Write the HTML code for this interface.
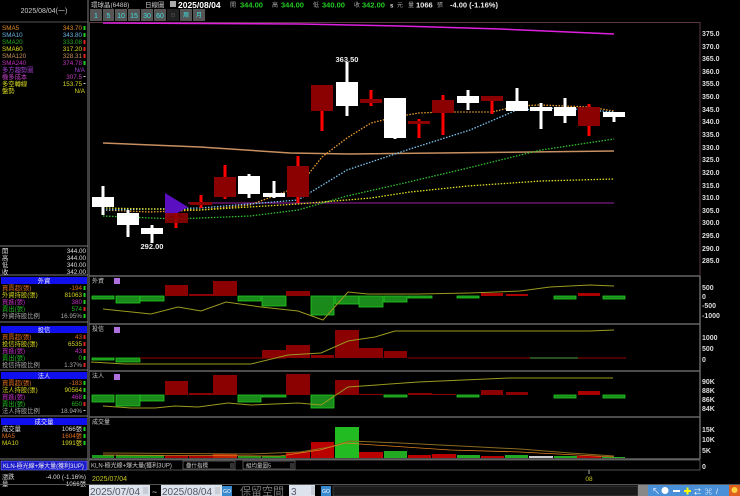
<!DOCTYPE html>
<html><head><meta charset="utf-8"><style>
html,body{margin:0;padding:0;background:#000;width:740px;height:496px;overflow:hidden}
svg{display:block}
text{font-family:"Liberation Sans","Noto Sans CJK TC",sans-serif}
</style></head><body>
<svg width="740" height="496" viewBox="0 0 740 496" xmlns="http://www.w3.org/2000/svg">
<rect width="740" height="496" fill="#000"/>
<!-- left panel borders -->
<line x1="88" y1="0" x2="88" y2="470" stroke="#555" stroke-width="1.5"/>
<line x1="0" y1="22" x2="88" y2="22" stroke="#555"/>
<line x1="0" y1="246" x2="88" y2="246" stroke="#777"/>
<line x1="0" y1="275" x2="88" y2="275" stroke="#777"/>
<text x="44" y="13" font-size="7" fill="#ccc" text-anchor="middle">2025/08/04(一)</text>
<g font-size="6.3">
<text x="2" y="30" fill="#e08a2a">SMA5</text><text x="82" y="30" fill="#e08a2a" text-anchor="end">343.70</text><rect x="83.5" y="26" width="2" height="4" fill="#2c2"/>
<text x="2" y="37" fill="#6ab4e0">SMA10</text><text x="82" y="37" fill="#6ab4e0" text-anchor="end">343.80</text><rect x="83.5" y="33" width="2" height="4" fill="#2c2"/>
<text x="2" y="44" fill="#22aa22">SMA20</text><text x="82" y="44" fill="#22aa22" text-anchor="end">333.08</text><rect x="83.5" y="40" width="2" height="4" fill="#d22"/>
<text x="2" y="51" fill="#d8d820">SMA60</text><text x="82" y="51" fill="#d8d820" text-anchor="end">317.20</text><rect x="83.5" y="47" width="2" height="4" fill="#d22"/>
<text x="2" y="58" fill="#c89060">SMA120</text><text x="82" y="58" fill="#c89060" text-anchor="end">328.31</text><rect x="83.5" y="54" width="2" height="4" fill="#d22"/>
<text x="2" y="65" fill="#c030c0">SMA240</text><text x="82" y="65" fill="#c030c0" text-anchor="end">374.78</text><rect x="83.5" y="61" width="2" height="4" fill="#2c2"/>
<text x="2" y="72" fill="#a040d0">多方趨勢圖</text><text x="85" y="72" fill="#a040d0" text-anchor="end">N/A</text>
<text x="2" y="79" fill="#c040c0">機多成本</text><text x="82" y="79" fill="#c040c0" text-anchor="end">307.5</text><rect x="83.5" y="76" width="2" height="1" fill="#ccc"/>
<text x="2" y="86" fill="#d8d820">多空轉線</text><text x="82" y="86" fill="#d8d820" text-anchor="end">153.75</text><rect x="83.5" y="83" width="2" height="1" fill="#ccc"/>
<text x="2" y="93" fill="#d8d820">盤勢</text><text x="85" y="93" fill="#d8d820" text-anchor="end">N/A</text>
</g>
<g font-size="6.3" fill="#ddd">
<text x="2" y="253">開</text><text x="86" y="253" text-anchor="end">344.00</text>
<text x="2" y="260">高</text><text x="86" y="260" text-anchor="end">344.00</text>
<text x="2" y="267">低</text><text x="86" y="267" text-anchor="end">340.00</text>
<text x="2" y="274">收</text><text x="86" y="274" text-anchor="end">342.00</text>
</g>
<!-- left info blocks -->
<g font-size="6.3">
<rect x="1" y="277" width="86" height="7" fill="#1010ee"/><text x="44" y="283" fill="#eee" text-anchor="middle">外資</text>
<text x="2" y="290" fill="#e07020">買賣超(張)</text><text x="82" y="290" fill="#e07020" text-anchor="end">-194</text><rect x="83.5" y="286" width="2" height="4" fill="#2c2"/>
<text x="2" y="297" fill="#d8d820">外資持股(張)</text><text x="82" y="297" fill="#d8d820" text-anchor="end">81063</text><rect x="83.5" y="293" width="2" height="4" fill="#2c2"/>
<text x="2" y="304" fill="#c030c0">買進(張)</text><text x="82" y="304" fill="#c030c0" text-anchor="end">380</text><rect x="83.5" y="300" width="2" height="4" fill="#2c2"/>
<text x="2" y="311" fill="#22bb22">賣出(張)</text><text x="82" y="311" fill="#22bb22" text-anchor="end">574</text><rect x="83.5" y="307" width="2" height="4" fill="#d22"/>
<text x="2" y="318" fill="#aaa">外資持股比例</text><text x="82" y="318" fill="#aaa" text-anchor="end">16.95%</text><rect x="83.5" y="314" width="2" height="4" fill="#2c2"/>
<line x1="0" y1="322" x2="88" y2="322" stroke="#777"/>
<rect x="1" y="326" width="86" height="7" fill="#1010ee"/><text x="44" y="332" fill="#eee" text-anchor="middle">投信</text>
<text x="2" y="339" fill="#e07020">買賣超(張)</text><text x="82" y="339" fill="#e07020" text-anchor="end">43</text><rect x="83.5" y="335" width="2" height="4" fill="#d22"/>
<text x="2" y="346" fill="#d8d820">投信持股(張)</text><text x="82" y="346" fill="#d8d820" text-anchor="end">6535</text><rect x="83.5" y="342" width="2" height="4" fill="#d22"/>
<text x="2" y="353" fill="#c030c0">買進(張)</text><text x="82" y="353" fill="#c030c0" text-anchor="end">43</text><rect x="83.5" y="349" width="2" height="4" fill="#d22"/>
<text x="2" y="360" fill="#22bb22">賣出(張)</text><text x="82" y="360" fill="#22bb22" text-anchor="end">0</text><rect x="83.5" y="356" width="2" height="4" fill="#2c2"/>
<text x="2" y="367" fill="#aaa">投信持股比例</text><text x="82" y="367" fill="#aaa" text-anchor="end">1.37%</text><rect x="83.5" y="363" width="2" height="4" fill="#d22"/>
<line x1="0" y1="370" x2="88" y2="370" stroke="#777"/>
<rect x="1" y="372" width="86" height="7" fill="#1010ee"/><text x="44" y="378" fill="#eee" text-anchor="middle">法人</text>
<text x="2" y="385" fill="#e07020">買賣超(張)</text><text x="82" y="385" fill="#e07020" text-anchor="end">-183</text><rect x="83.5" y="381" width="2" height="4" fill="#2c2"/>
<text x="2" y="392" fill="#d8d820">法人持股(張)</text><text x="82" y="392" fill="#d8d820" text-anchor="end">90564</text><rect x="83.5" y="388" width="2" height="4" fill="#2c2"/>
<text x="2" y="399" fill="#c030c0">買進(張)</text><text x="82" y="399" fill="#c030c0" text-anchor="end">468</text><rect x="83.5" y="395" width="2" height="4" fill="#2c2"/>
<text x="2" y="406" fill="#22bb22">賣出(張)</text><text x="82" y="406" fill="#22bb22" text-anchor="end">650</text><rect x="83.5" y="402" width="2" height="4" fill="#d22"/>
<text x="2" y="413" fill="#aaa">法人持股比例</text><text x="82" y="413" fill="#aaa" text-anchor="end">18.94%</text><rect x="83.5" y="410" width="2" height="1" fill="#ccc"/>
<line x1="0" y1="416" x2="88" y2="416" stroke="#777"/>
<rect x="1" y="418" width="86" height="7" fill="#1010ee"/><text x="44" y="424" fill="#eee" text-anchor="middle">成交量</text>
<text x="2" y="431" fill="#ddd">成交量</text><text x="82" y="431" fill="#ddd" text-anchor="end">1066張</text><rect x="83.5" y="427" width="2" height="4" fill="#2c2"/>
<text x="2" y="438" fill="#e07020">MA5</text><text x="82" y="438" fill="#e07020" text-anchor="end">1604張</text><rect x="83.5" y="434" width="2" height="4" fill="#2c2"/>
<text x="2" y="445" fill="#d8d820">MA10</text><text x="82" y="445" fill="#d8d820" text-anchor="end">1991張</text><rect x="83.5" y="441" width="2" height="4" fill="#2c2"/>
<line x1="0" y1="459" x2="88" y2="459" stroke="#777"/>
<rect x="1" y="461" width="86" height="9" fill="#1a1acc" stroke="#88f" stroke-width="0.6"/><text x="3" y="468" fill="#eee" font-size="6">KLN-極光線+爆大量(獲利3UP)</text>
<text x="2" y="479" fill="#ddd">漲跌</text><text x="86" y="479" fill="#ddd" text-anchor="end">-4.00 (-1.16%)</text>
<text x="2" y="486" fill="#ddd">量</text><text x="86" y="486" fill="#ddd" text-anchor="end">1066張</text>
</g>
<!-- top bar -->
<g font-size="6.5" fill="#ccc">
<text x="91" y="7">環球晶(6488)</text>
<text x="145" y="7">日線圖</text>
</g>
<rect x="170" y="1" width="6" height="6" fill="#aaa"/>
<text x="178" y="8" font-size="8.5" font-weight="bold" fill="#fff">2025/08/04</text>
<g font-size="7.5" font-weight="bold">
<text x="230" y="7" fill="#aaa" font-size="6" font-weight="normal">開</text><text x="240" y="7.5" fill="#22cc22">344.00</text>
<text x="272" y="7" fill="#aaa" font-size="6" font-weight="normal">高</text><text x="281" y="7.5" fill="#22cc22">344.00</text>
<text x="313" y="7" fill="#aaa" font-size="6" font-weight="normal">低</text><text x="322" y="7.5" fill="#22cc22">340.00</text>
<text x="354" y="7" fill="#aaa" font-size="6" font-weight="normal">收</text><text x="362" y="7.5" fill="#22cc22">342.00</text>
<text x="390" y="7.5" fill="#ddd" font-size="6">s</text><text x="397" y="7" fill="#aaa" font-size="6" font-weight="normal">元</text>
<text x="408" y="7" fill="#aaa" font-size="6" font-weight="normal">量</text><text x="416" y="7.5" fill="#eee">1066</text><text x="437" y="7" fill="#aaa" font-size="6" font-weight="normal">張</text>
<text x="450" y="7.5" fill="#eee">-4.00 (-1.16%)</text>
</g>
<g font-size="7" fill="#3ee0e0" text-anchor="middle">
<rect x="90" y="9" width="12" height="12" fill="#555"/><text x="96" y="18">1</text>
<rect x="103" y="9" width="11" height="12" fill="#555"/><text x="108.5" y="18">5</text>
<rect x="115" y="9" width="12" height="12" fill="#555"/><text x="121" y="18">10</text>
<rect x="128" y="9" width="12" height="12" fill="#555"/><text x="134" y="18">15</text>
<rect x="141" y="9" width="12" height="12" fill="#555"/><text x="147" y="18">30</text>
<rect x="154" y="9" width="12" height="12" fill="#555"/><text x="160" y="18">60</text>
<rect x="167" y="9" width="12" height="12" fill="#222"/><text x="173" y="17" fill="#555" font-size="5">日</text>
<rect x="180" y="9" width="12" height="12" fill="#555"/><text x="186" y="17" font-size="6">周</text>
<rect x="193" y="9" width="12" height="12" fill="#555"/><text x="199" y="17" font-size="6">月</text>
</g>
<!-- main chart frame -->
<line x1="89.5" y1="22" x2="89.5" y2="460" stroke="#444"/>
<line x1="700" y1="22" x2="700" y2="276" stroke="#5a3a40"/>
<line x1="89" y1="22.5" x2="700" y2="22.5" stroke="#5a3a40"/>
<!-- right axis -->
<g font-size="7" font-weight="bold" fill="#ddd">
<text x="702" y="36">375.0</text><text x="702" y="49">370.0</text><text x="702" y="61">365.0</text><text x="702" y="74">360.0</text><text x="702" y="86">355.0</text><text x="702" y="99">350.0</text><text x="702" y="112">345.0</text><text x="702" y="124">340.0</text><text x="702" y="137">335.0</text><text x="702" y="150">330.0</text><text x="702" y="162">325.0</text><text x="702" y="175">320.0</text><text x="702" y="188">315.0</text><text x="702" y="200">310.0</text><text x="702" y="213">305.0</text><text x="702" y="225">300.0</text><text x="702" y="238">295.0</text><text x="702" y="251">290.0</text><text x="702" y="263">285.0</text>
<text x="702" y="290">500</text><text x="702" y="299">0</text><text x="702" y="308">-500</text><text x="702" y="318">-1000</text>
<text x="702" y="340">1000</text><text x="702" y="351">500</text><text x="702" y="362">0</text>
<text x="702" y="384">90K</text><text x="702" y="393">88K</text><text x="702" y="402">86K</text><text x="702" y="411">84K</text>
<text x="702" y="432">15K</text><text x="702" y="442">10K</text><text x="702" y="453">5K</text><text x="702" y="469">0</text>
</g>
<!-- MA lines -->
<polyline points="103,23 300,24 400,26 500,29 614,34" fill="none" stroke="#e020e0" stroke-width="1.5"/>
<polyline points="103,143 200,147 290,153 350,154 614,151" fill="none" stroke="#c89060" stroke-width="1.5"/>
<line x1="188" y1="203" x2="614" y2="203" stroke="#9a20a0" stroke-width="1"/>
<g fill="none" stroke-width="1.3" stroke-dasharray="1.5,1.5">
<polyline points="103,210 150,212 200,210 250,205 298,187 322,157 347,138 371,123 395,117 419,113 443,112 492,112 517,106 541,105 589,107 614,111" stroke="#f0a030"/>
<polyline points="103,210 200,208 298,200 347,170 410,149 470,130 517,110 560,108 614,112" stroke="#7ac4f0"/>
<polyline points="103,216 176,219 250,216 298,210 347,196 400,184 468,168 541,150 614,139" stroke="#30c030"/>
<polyline points="103,208 200,210 298,204 371,198 410,192 468,186 541,181 614,179" stroke="#e0e020"/>
</g>
<!-- candles -->
<g>
<polygon points="165,193 165,220 188,207" fill="#5a10c0"/>
<rect x="101.5" y="186" width="3" height="29" fill="#fff"/><rect x="92" y="197" width="22" height="10" fill="#fff"/>
<rect x="126.5" y="210" width="3" height="27" fill="#fff"/><rect x="117" y="213" width="22" height="12" fill="#fff"/>
<rect x="150.5" y="225" width="3" height="18" fill="#fff"/><rect x="141" y="228" width="22" height="6" fill="#fff"/>
<rect x="174.5" y="213" width="3" height="15" fill="#f00"/><rect x="165" y="213" width="23" height="10" fill="#8b0000" opacity="0.9"/>
<rect x="199.5" y="195" width="3" height="13" fill="#f00"/><rect x="190" y="202" width="22" height="3" fill="#8b0000"/>
<rect x="223.5" y="165" width="3" height="34" fill="#f00"/><rect x="214" y="177" width="22" height="20" fill="#8b0000"/>
<rect x="247.5" y="174" width="3" height="24" fill="#fff"/><rect x="238" y="176" width="22" height="18" fill="#fff"/>
<rect x="272.5" y="181" width="3" height="17" fill="#fff"/><rect x="263" y="193" width="22" height="4" fill="#fff"/>
<rect x="296.5" y="156" width="3" height="47" fill="#f00"/><rect x="287" y="166" width="22" height="31" fill="#8b0000"/>
<rect x="320.5" y="85" width="3" height="46" fill="#f00"/><rect x="311" y="85" width="22" height="26" fill="#8b0000"/>
<rect x="345.5" y="62" width="3" height="54" fill="#fff"/><rect x="336" y="82" width="22" height="24" fill="#fff"/>
<rect x="369.5" y="90" width="3" height="16" fill="#f00"/><rect x="360" y="99" width="22" height="4" fill="#8b0000"/>
<rect x="393.5" y="98" width="3" height="41" fill="#fff"/><rect x="384" y="98" width="22" height="40" fill="#fff"/>
<rect x="417.5" y="119" width="3" height="19" fill="#f00"/><rect x="408" y="121" width="22" height="3" fill="#8b0000"/>
<rect x="441.5" y="95" width="3" height="40" fill="#f00"/><rect x="432" y="100" width="22" height="13" fill="#8b0000"/>
<rect x="466.5" y="90" width="3" height="20" fill="#fff"/><rect x="457" y="96" width="22" height="7" fill="#fff"/>
<rect x="490.5" y="96" width="3" height="18" fill="#f00"/><rect x="481" y="96" width="22" height="5" fill="#8b0000"/>
<rect x="515.5" y="88" width="3" height="23" fill="#fff"/><rect x="506" y="101" width="22" height="10" fill="#fff"/>
<rect x="539.5" y="103" width="3" height="26" fill="#fff"/><rect x="530" y="107" width="22" height="4" fill="#fff"/>
<rect x="563.5" y="98" width="3" height="25" fill="#fff"/><rect x="554" y="107" width="22" height="9" fill="#fff"/>
<rect x="587.5" y="104" width="3" height="32" fill="#f00"/><rect x="578" y="107" width="22" height="19" fill="#8b0000"/>
<rect x="612.5" y="112" width="3" height="10" fill="#fff"/><rect x="603" y="112" width="22" height="5" fill="#fff"/>
</g>
<text x="347" y="62" font-size="7.5" font-weight="bold" fill="#eee" text-anchor="middle">363.50</text>
<text x="152" y="249" font-size="7.5" font-weight="bold" fill="#eee" text-anchor="middle">292.00</text>
<!-- subpanel separators -->
<g stroke="#666" stroke-width="1.5">
<line x1="89" y1="276" x2="700" y2="276"/><line x1="89" y1="324" x2="700" y2="324"/><line x1="89" y1="371" x2="700" y2="371"/><line x1="89" y1="417" x2="700" y2="417"/><line x1="89" y1="459" x2="700" y2="459"/>
<line x1="700" y1="276" x2="700" y2="459"/>
</g>
<g font-size="6" fill="#ccc">
<text x="92" y="283">外資</text><rect x="114" y="278" width="6" height="6" fill="#b070e0"/>
<text x="92" y="331">投信</text><rect x="114" y="327" width="6" height="6" fill="#b070e0"/>
<text x="92" y="378">法人</text><rect x="114" y="374" width="6" height="6" fill="#b070e0"/>
<text x="92" y="424">成交量</text>
</g>
<!-- 外資 bars -->
<g stroke-width="0.8">
<rect x="92" y="296" width="22" height="3" fill="#1a8a1a" stroke="#2c2"/>
<rect x="116" y="296" width="24" height="7" fill="#1a8a1a" stroke="#2c2"/>
<rect x="140" y="296" width="24" height="5" fill="#1a8a1a" stroke="#2c2"/>
<rect x="165" y="285" width="23" height="11" fill="#8b0000"/>
<rect x="189" y="294" width="24" height="2" fill="#8b0000"/>
<rect x="213" y="281" width="24" height="15" fill="#8b0000"/>
<rect x="238" y="296" width="23" height="5" fill="#1a8a1a" stroke="#2c2"/>
<rect x="262" y="296" width="24" height="10" fill="#1a8a1a" stroke="#2c2"/>
<rect x="286" y="291" width="24" height="5" fill="#8b0000"/>
<rect x="311" y="296" width="23" height="19" fill="#1a8a1a" stroke="#2c2"/>
<rect x="335" y="296" width="24" height="8" fill="#1a8a1a" stroke="#2c2"/>
<rect x="359" y="296" width="24" height="11" fill="#1a8a1a" stroke="#2c2"/>
<rect x="384" y="296" width="23" height="6" fill="#1a8a1a" stroke="#2c2"/>
<rect x="408" y="296" width="24" height="2" fill="#1a8a1a" stroke="#2c2"/>
<rect x="457" y="296" width="22" height="2" fill="#1a8a1a" stroke="#2c2"/>
<rect x="481" y="293" width="22" height="3" fill="#a00"/>
<rect x="506" y="294" width="22" height="2" fill="#a00"/>
<rect x="554" y="296" width="22" height="3" fill="#1a8a1a" stroke="#2c2"/>
<rect x="578" y="293" width="22" height="3" fill="#a00"/>
<rect x="603" y="296" width="22" height="3" fill="#1a8a1a" stroke="#2c2"/>
</g>
<polyline points="103,309 151,314 178,307 201,311 226,302 261,307 298,311 323,320 348,292 368,294 418,294 470,293 520,291 550,287 590,285 614,286" fill="none" stroke="#9a9a20" stroke-width="1"/>
<!-- 投信 -->
<rect x="92" y="358" width="22" height="2" fill="#1a8a1a" stroke="#2c2" stroke-width="0.8"/>
<rect x="116" y="358" width="24" height="4" fill="#1a8a1a" stroke="#2c2" stroke-width="0.8"/>
<line x1="140" y1="358" x2="286" y2="358" stroke="#600" stroke-width="1.5"/>
<rect x="262" y="350" width="24" height="8" fill="#8b0000"/>
<rect x="286" y="345" width="24" height="13" fill="#8b0000"/>
<rect x="311" y="355" width="23" height="3" fill="#8b0000"/>
<rect x="335" y="330" width="24" height="28" fill="#8b0000"/>
<rect x="359" y="348" width="24" height="10" fill="#8b0000"/>
<rect x="384" y="351" width="23" height="7" fill="#8b0000"/>
<line x1="408" y1="358" x2="626" y2="358" stroke="#700" stroke-width="1.2"/>
<line x1="530" y1="358" x2="578" y2="358" stroke="#2a6a2a" stroke-width="1.5"/>
<polyline points="91,362 125,364 251,364 288,355 321,353 348,341 375,337 395,331 418,331 590,331 614,330" fill="none" stroke="#9a9a20" stroke-width="1"/>
<!-- 法人 -->
<g stroke-width="0.8">
<rect x="92" y="395" width="22" height="7" fill="#1a8a1a" stroke="#2c2"/>
<rect x="116" y="395" width="24" height="11" fill="#1a8a1a" stroke="#2c2"/>
<rect x="140" y="395" width="24" height="6" fill="#1a8a1a" stroke="#2c2"/>
<rect x="165" y="381" width="23" height="14" fill="#8b0000"/>
<rect x="189" y="393" width="24" height="2" fill="#8b0000"/>
<rect x="213" y="375" width="24" height="20" fill="#8b0000"/>
<rect x="238" y="395" width="23" height="7" fill="#1a8a1a" stroke="#2c2"/>
<rect x="262" y="395" width="24" height="2" fill="#1a8a1a" stroke="#2c2"/>
<rect x="286" y="374" width="24" height="21" fill="#8b0000"/>
<rect x="311" y="395" width="23" height="13" fill="#1a8a1a" stroke="#2c2"/>
<rect x="335" y="380" width="24" height="15" fill="#8b0000"/>
<rect x="359" y="394" width="24" height="1" fill="#8b0000"/>
<rect x="384" y="395" width="23" height="2" fill="#1a8a1a" stroke="#2c2"/>
<rect x="408" y="393" width="24" height="2" fill="#8b0000"/>
<rect x="432" y="394" width="24" height="1" fill="#8b0000"/>
<rect x="457" y="395" width="22" height="2" fill="#1a8a1a" stroke="#2c2"/>
<rect x="481" y="390" width="22" height="5" fill="#8b0000"/>
<rect x="506" y="392" width="22" height="3" fill="#8b0000"/>
<rect x="554" y="395" width="22" height="3" fill="#1a8a1a" stroke="#2c2"/>
<rect x="578" y="391" width="22" height="4" fill="#a00"/>
<rect x="603" y="395" width="22" height="3" fill="#1a8a1a" stroke="#2c2"/>
</g>
<polyline points="103,406 131,408 155,408 175,406 198,407 228,403 251,405 298,403 321,405 348,387 418,382 510,378 613,378" fill="none" stroke="#9a9a20" stroke-width="1"/>
<!-- volume -->
<g>
<rect x="92" y="455" width="22" height="3" fill="#1a9a1a"/>
<rect x="116" y="455" width="24" height="3" fill="#1a9a1a"/>
<rect x="140" y="455" width="24" height="3" fill="#1a9a1a"/>
<rect x="165" y="456" width="23" height="2" fill="#a00"/>
<rect x="189" y="456" width="24" height="2" fill="#a00"/>
<rect x="213" y="454" width="24" height="4" fill="#c02000"/>
<rect x="238" y="456" width="23" height="2" fill="#1a9a1a"/>
<rect x="262" y="456" width="24" height="2" fill="#1a9a1a"/>
<rect x="286" y="452" width="24" height="6" fill="#b00"/>
<rect x="311" y="442" width="23" height="16" fill="#b00"/>
<rect x="335" y="427" width="24" height="31" fill="#22bb22"/>
<rect x="359" y="452" width="24" height="6" fill="#b00"/>
<rect x="384" y="451" width="23" height="7" fill="#22aa22"/>
<rect x="408" y="455" width="23" height="3" fill="#b00"/>
<rect x="432" y="454" width="24" height="4" fill="#b00"/>
<rect x="457" y="455" width="23" height="3" fill="#22aa22"/>
<rect x="481" y="456" width="23" height="2" fill="#b00"/>
<rect x="505" y="455" width="23" height="3" fill="#22aa22"/>
<rect x="529" y="456" width="24" height="2" fill="#ccc"/>
<rect x="554" y="456" width="23" height="2" fill="#22aa22"/>
<rect x="577" y="456" width="24" height="2" fill="#b00"/>
<rect x="602" y="457" width="23" height="1" fill="#22aa22"/>
</g>
<polyline points="103,453 250,454 300,452 330,447 350,441 400,443 460,446 520,449 570,453 614,456" fill="none" stroke="#8a6a20" stroke-width="1"/>
<polyline points="103,455 280,456 320,450 345,443 390,446 450,450 520,452 614,457" fill="none" stroke="#e08020" stroke-width="0.8"/>
<!-- control bar -->
<rect x="89" y="460" width="611" height="10" fill="#000" stroke="#666" stroke-width="0.8"/>
<text x="91" y="467.5" font-size="6" fill="#ccc">KLN-極光線+爆大量(獲利3UP)</text>
<rect x="183" y="461" width="52" height="8" fill="#000" stroke="#888" stroke-width="0.6"/><text x="186" y="467.5" font-size="5.5" fill="#ccc">疊什指標</text><rect x="230" y="463" width="4" height="5" fill="#333"/>
<rect x="243" y="461" width="52" height="8" fill="#000" stroke="#888" stroke-width="0.6"/><text x="246" y="467.5" font-size="5.5" fill="#ccc">組均量圖5</text><rect x="290" y="463" width="4" height="5" fill="#333"/>
<line x1="589" y1="470" x2="589" y2="474" stroke="#aa9" />
<text x="92" y="481" font-size="7" fill="#c8c820">2025/07/04</text>
<text x="589" y="481" font-size="6.5" fill="#c8c820" text-anchor="middle">08</text>
<line x1="0" y1="484.5" x2="740" y2="484.5" stroke="#555"/>
<!-- bottom inputs -->
<rect x="89" y="485" width="61" height="11" fill="#dde3ec"/><text x="90" y="495" font-size="10" fill="#556">2025/07/04</text>
<rect x="143" y="487" width="5" height="7" fill="#c8ccd4"/>
<text x="152" y="495" font-size="9" fill="#ccc">~</text>
<rect x="161" y="485" width="61" height="11" fill="#dde3ec"/><text x="162" y="495" font-size="10" fill="#556">2025/08/04</text>
<rect x="215" y="487" width="5" height="7" fill="#c8ccd4"/>
<rect x="222" y="486" width="10" height="10" fill="#3a8ad0"/><text x="227" y="493" font-size="5" fill="#fff" text-anchor="middle">GO</text>
<text x="240" y="495" font-size="11" fill="#777" font-family="Noto Sans CJK TC, sans-serif">保留空間</text>
<rect x="289" y="485" width="26" height="11" fill="#dde3ec"/><text x="291" y="495" font-size="10" fill="#556">3</text>
<rect x="311" y="486" width="4" height="9" fill="#c8ccd4"/>
<rect x="321" y="486" width="10" height="10" fill="#3a8ad0"/><text x="326" y="493" font-size="5" fill="#fff" text-anchor="middle">GO</text>
<rect x="333" y="486" width="305" height="10" fill="#1a1a1a" stroke="#555" stroke-width="0.6"/>
<rect x="638" y="485" width="10" height="11" fill="#888"/>
<rect x="648" y="485" width="92" height="11" fill="#4a90d8"/>
<g fill="#fff">
<text x="652" y="494" font-size="8">↖</text><circle cx="665" cy="490.5" r="3.5" fill="#fff"/><rect x="673" y="490" width="7" height="2"/><rect x="684" y="490" width="7" height="2" fill="#ff0"/><rect x="686.5" y="487.5" width="2" height="7" fill="#ff0"/>
<text x="694" y="494" font-size="7">⇄</text><text x="705" y="494" font-size="7">⌘</text><text x="716" y="494" font-size="7">/</text>
</g>
<rect x="729" y="485" width="11" height="11" fill="#e06020"/><circle cx="734.5" cy="490" r="3" fill="#ffd040"/>
</svg>
</body></html>
